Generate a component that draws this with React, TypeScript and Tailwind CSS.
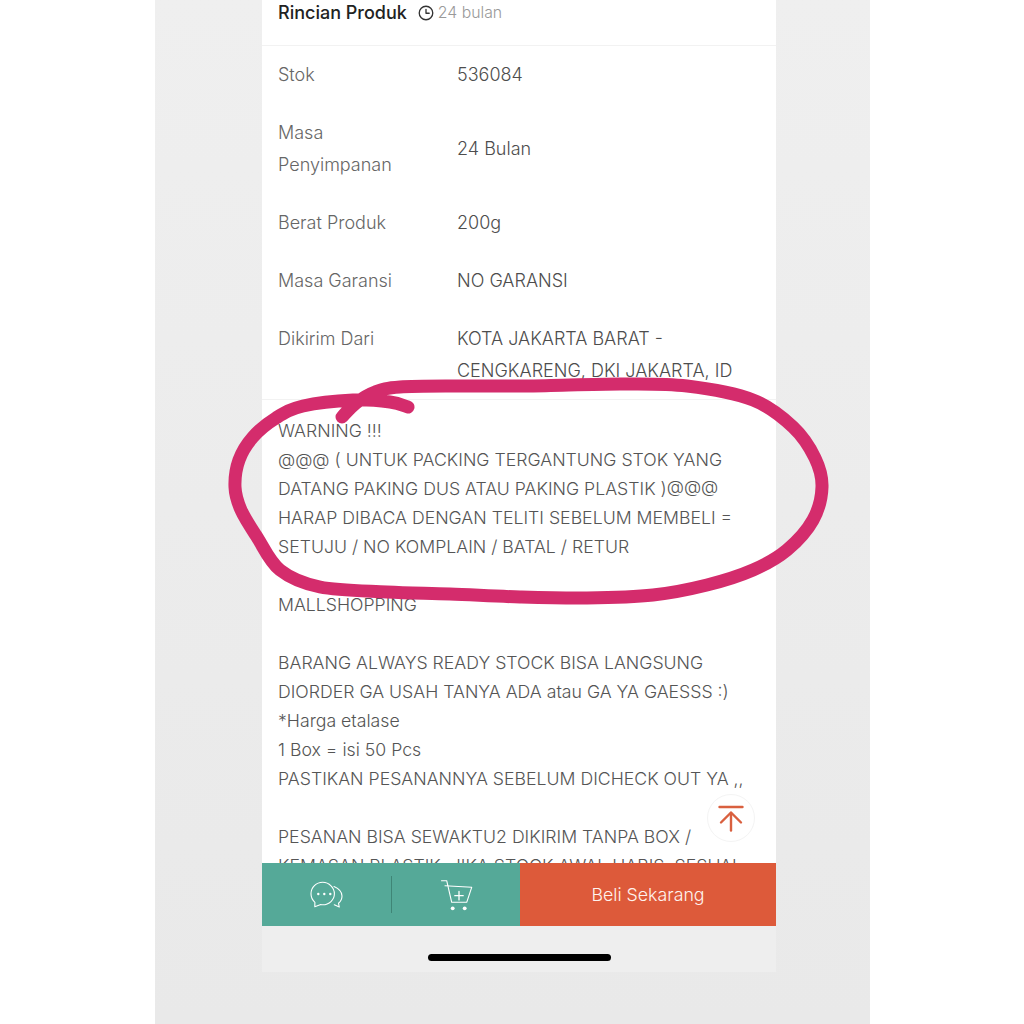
const ROWS = [
  { label: ["Stok"], value: ["536084"] },
  { label: ["Masa", "Penyimpanan"], value: ["24 Bulan"] },
  { label: ["Berat Produk"], value: ["200g"] },
  { label: ["Masa Garansi"], value: ["NO GARANSI"] },
  { label: ["Dikirim Dari"], value: ["KOTA JAKARTA BARAT -", "CENGKARENG, DKI JAKARTA, ID"] },
];

const DESCRIPTION = [
  "WARNING !!!",
  "@@@ ( UNTUK PACKING TERGANTUNG STOK YANG",
  "DATANG PAKING DUS ATAU PAKING PLASTIK )@@@",
  "HARAP DIBACA DENGAN TELITI SEBELUM MEMBELI =",
  "SETUJU / NO KOMPLAIN / BATAL / RETUR",
  "",
  "MALLSHOPPING",
  "",
  "BARANG ALWAYS READY STOCK BISA LANGSUNG",
  "DIORDER GA USAH TANYA ADA atau GA YA GAESSS :)",
  "*Harga etalase",
  "1 Box = isi 50 Pcs",
  "PASTIKAN PESANANNYA SEBELUM DICHECK OUT YA ,,",
  "",
  "PESANAN BISA SEWAKTU2 DIKIRIM TANPA BOX /",
  "KEMASAN PLASTIK. JIKA STOCK AWAL HABIS, SESUAI",
];

// hand drawn marker loop, points traced from the screenshot
const LOOP: [number, number][] = [
  [342, 417], [356, 403], [375, 392], [400, 387], [460, 386], [530, 386], [620, 384], [687, 386],
  [753, 400], [793, 427], [815, 458], [822, 487], [813, 520], [787, 550], [753, 570], [707, 585],
  [653, 595], [587, 598], [520, 597], [450, 594], [387, 592], [320, 587], [280, 570], [257, 537],
  [241, 510], [235, 487], [239, 460], [253, 437], [276, 418], [303, 406], [353, 400], [390, 402],
  [408, 407],
];

function smoothPath(pts: [number, number][]) {
  let d = `M${pts[0][0]} ${pts[0][1]}`;
  for (let i = 0; i < pts.length - 1; i++) {
    const p0 = pts[Math.max(i - 1, 0)];
    const p1 = pts[i];
    const p2 = pts[i + 1];
    const p3 = pts[Math.min(i + 2, pts.length - 1)];
    const c1x = p1[0] + (p2[0] - p0[0]) / 6;
    const c1y = p1[1] + (p2[1] - p0[1]) / 6;
    const c2x = p2[0] - (p3[0] - p1[0]) / 6;
    const c2y = p2[1] - (p3[1] - p1[1]) / 6;
    d += ` C${c1x} ${c1y} ${c2x} ${c2y} ${p2[0]} ${p2[1]}`;
  }
  return d;
}

function ClockIcon() {
  return (
    <svg width="16" height="16" viewBox="0 0 17 17" fill="none" stroke="#333" strokeWidth="1.4" strokeLinecap="round" strokeLinejoin="round">
      <circle cx="8.5" cy="8.5" r="7.2" />
      <path d="M8.5 4.6v4.2h3.4" />
    </svg>
  );
}

function ChatIcon() {
  return (
    <svg width="34" height="28" viewBox="0 0 34 28" fill="none" stroke="#fff" strokeWidth="1.1" strokeLinejoin="round" strokeLinecap="round">
      <path d="M12.700 1.300C6.200 1.300 1 6.500 1 12.800c0 3.400 1.500 6.400 3.900 8.500l-.1 4.500 6-2.200c.6.100 1.300.200 1.900.200 6.500 0 11.700-5 11.700-11S19.200 1.300 12.700 1.300z" />
      <path d="M24 5.500c4.500 2 8 5 8 9.500 0 3-1.300 5.500-3.500 7.300l.8 3.700-5-2.300" />
      <circle cx="8.300" cy="13" r="1.200" fill="#fff" stroke="none" />
      <circle cx="14.300" cy="13" r="1.200" fill="#fff" stroke="none" />
      <circle cx="20.300" cy="13" r="1.200" fill="#fff" stroke="none" />
    </svg>
  );
}

function CartIcon() {
  return (
    <svg width="33" height="32" viewBox="0 0 33 32" fill="none" stroke="#fff" strokeWidth="1.1" strokeLinecap="round" strokeLinejoin="round">
      <path d="M1.500 1.700h5.200l5 21.600h15l5-15-26.700-1.600" />
      <path d="M19 12.500v8.400M14.800 16.700h8.400" strokeWidth="1.300" />
      <circle cx="12.700" cy="29.300" r="1.900" fill="#fff" stroke="none" />
      <circle cx="24.700" cy="29.300" r="1.900" fill="#fff" stroke="none" />
    </svg>
  );
}

function ToTopIcon() {
  return (
    <svg width="26" height="28" viewBox="0 0 26 28" fill="none" stroke="#d9603f" strokeWidth="2.400" strokeLinecap="round" strokeLinejoin="round">
      <path d="M1.500 3h23" />
      <path d="M13 26.500V9" />
      <path d="M3 18.500L13 8.500l10 10" />
    </svg>
  );
}

export default function App() {
  return (
    <div className="relative h-[1024px] w-full overflow-hidden bg-white font-['Inter',sans-serif]">
      <div className="ml-[155px] h-full w-[715px] bg-gradient-to-b from-[#efefef] to-[#e9e9e9]">
        <div className="ml-[107px] flex h-[972px] w-[514px] flex-col bg-[#eeeeee]">
          <div className="relative h-[863px] overflow-hidden bg-white">
            <div className="flex h-[46px] items-start gap-[11px] border-b border-[#f2f2f2] px-4 pt-[1px]">
              <span className="text-[18px] font-medium leading-[24px] text-[#222222]">Rincian Produk</span>
              <span className="flex h-[24px] items-center gap-[4px] text-[15.800px] font-light text-[#999999]">
                <ClockIcon />
                24 bulan
              </span>
            </div>

            <div className="h-[354px] border-b border-[#f2f2f2]">
              {ROWS.map((row) => (
                <div key={row.label[0]} className="flex items-start px-4 py-[13px] text-[18px] font-light leading-[32px]">
                  <div className="w-[179px] text-[#666666]">
                    {row.label.map((l) => (
                      <div key={l}>{l}</div>
                    ))}
                  </div>
                  <div className="self-center whitespace-nowrap text-[#4d4d4d]">
                    {row.value.map((v) => (
                      <div key={v}>{v}</div>
                    ))}
                  </div>
                </div>
              ))}
            </div>

            <div className="px-4 pt-4 text-[17.700px] font-light leading-[29px] text-[#555555]">
              {DESCRIPTION.map((line, i) => (
                <div key={i} className="h-[29px] whitespace-nowrap">
                  {line}
                </div>
              ))}
            </div>

            <button className="absolute right-[21px] top-[794px] flex h-[48px] w-[48px] items-center justify-center rounded-full border border-[#f4f4f4] bg-white/80">
              <ToTopIcon />
            </button>
          </div>

          <div className="flex h-[63px] shrink-0">
            <div className="flex w-[258px] items-center bg-[#55a998]">
              <div className="flex h-[37px] w-[130px] items-center justify-center border-r border-[#3f8576]">
                <ChatIcon />
              </div>
              <div className="flex flex-1 items-center justify-center pl-[1px]">
                <CartIcon />
              </div>
            </div>
            <div className="flex flex-1 items-center justify-center bg-[#dd5a3a] pt-[1px] text-[17.800px] font-light text-[#fff3ee]">
              Beli Sekarang
            </div>
          </div>

          <div className="flex flex-1 items-start justify-start pl-[166px] pt-[28px]">
            <div className="h-[7px] w-[183px] rounded-full bg-black" />
          </div>
        </div>
      </div>

      <svg className="pointer-events-none absolute left-0 top-0" width="1024" height="1024" viewBox="0 0 1024 1024" fill="none">
        <path d={smoothPath(LOOP)} stroke="#d42c6c" strokeWidth="13" strokeLinecap="round" strokeLinejoin="round" />
      </svg>
    </div>
  );
}
